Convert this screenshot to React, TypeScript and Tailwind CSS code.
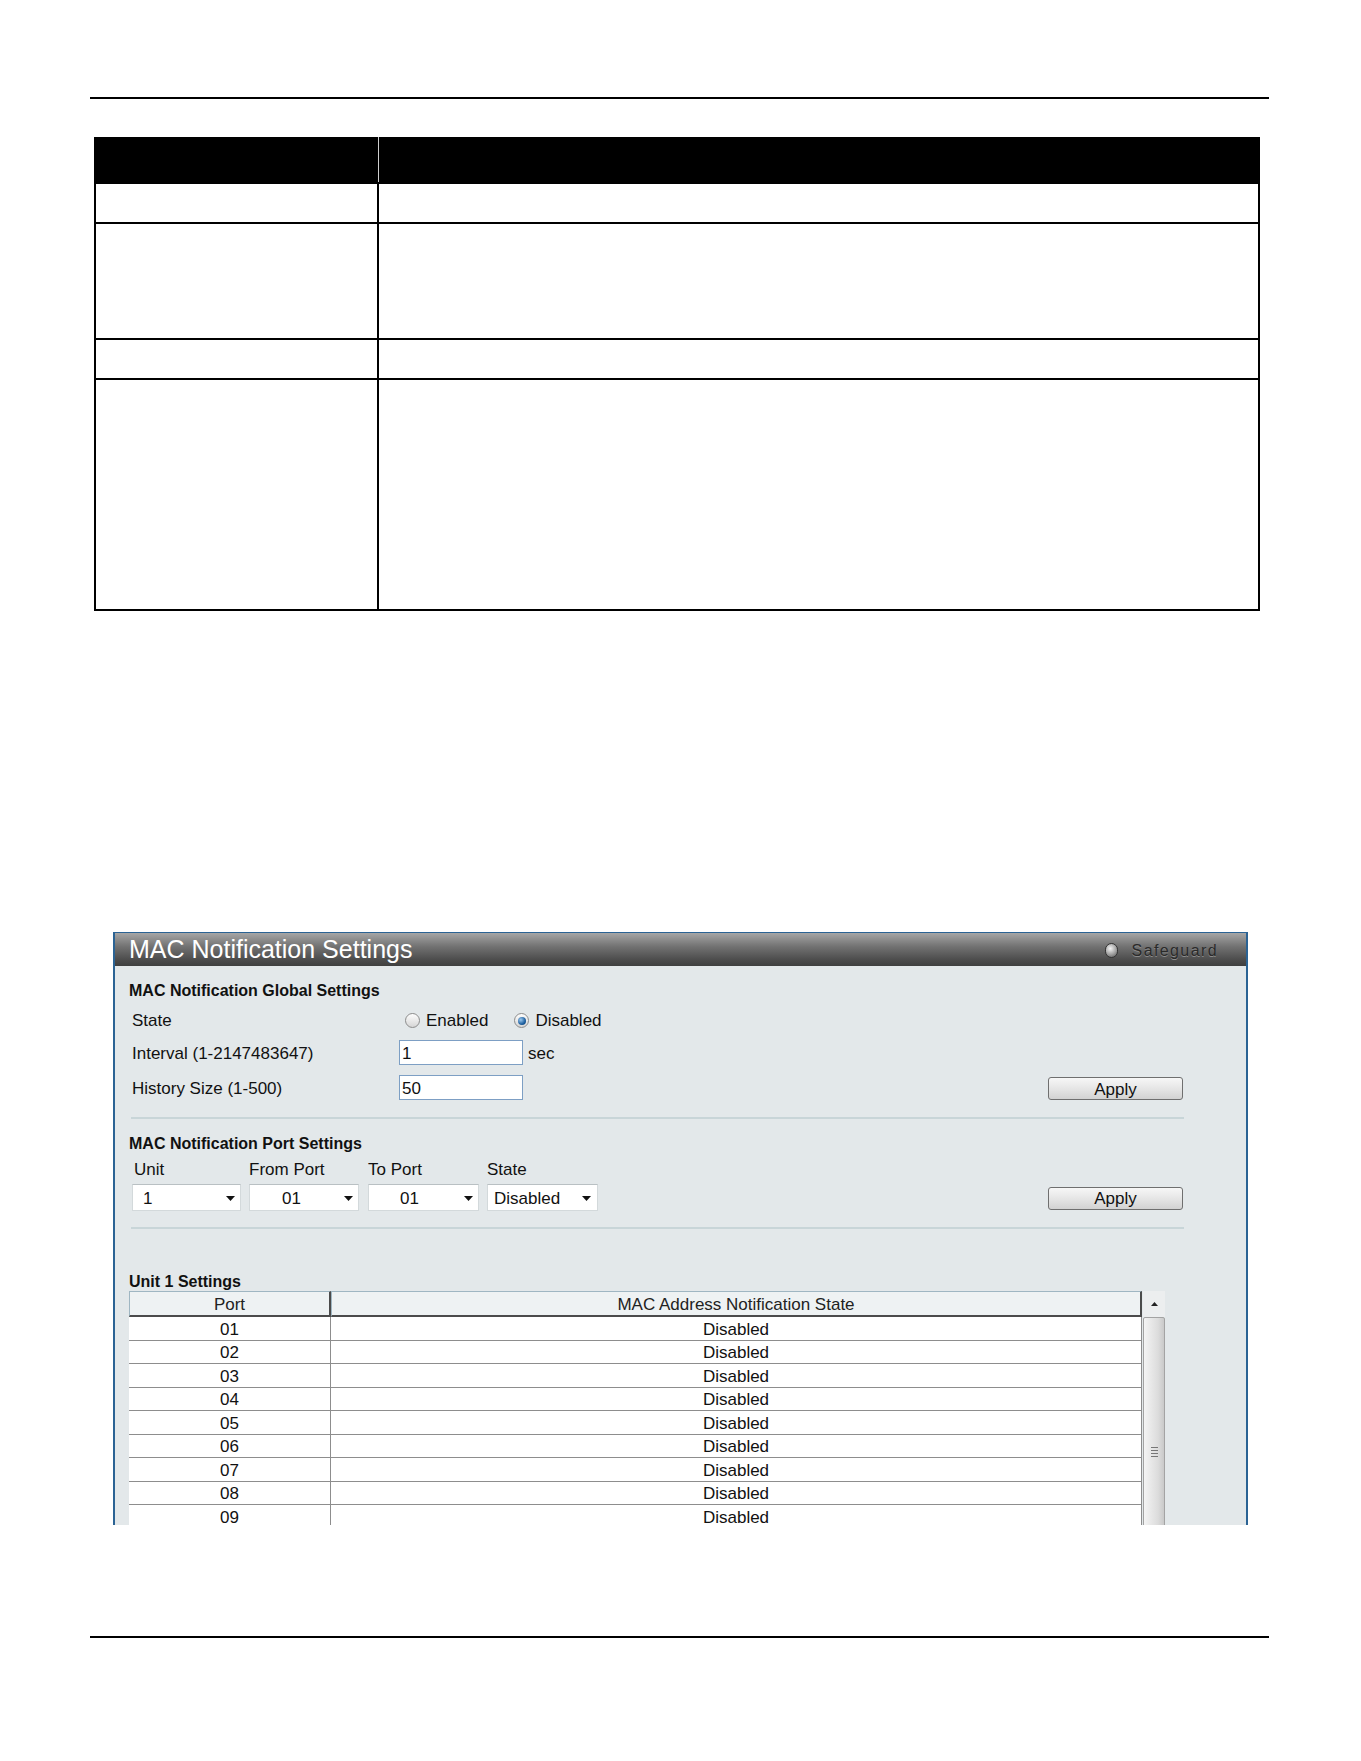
import React from "react";

const ports = ["01", "02", "03", "04", "05", "06", "07", "08", "09"];

function Radio({ checked }: { checked?: boolean }) {
  return (
    <span className="flex h-[15px] w-[15px] items-center justify-center rounded-full border border-[#8c8c8c] bg-[linear-gradient(#fdfdfd,#d6d6d6)]">
      {checked ? (
        <span className="h-[8px] w-[8px] rounded-full bg-[radial-gradient(circle_at_35%_35%,#9cc9ef,#1d5f9f_60%,#0f3f70)]" />
      ) : null}
    </span>
  );
}

function Arrow() {
  return (
    <svg width="9" height="5" viewBox="0 0 9 5" className="shrink-0">
      <path d="M0 0h9L4.5 5z" fill="#111" />
    </svg>
  );
}

function Select({ value, width, pl, pr }: { value: string; width: string; pl: string; pr: string }) {
  return (
    <div className={`flex h-[27px] items-center border border-[#d3d9db] border-t-[#b9c0c3] bg-white pt-[2px] ${width} ${pl} ${pr}`}>
      <span>{value}</span>
      <span className="ml-auto">
        <Arrow />
      </span>
    </div>
  );
}

function ApplyButton() {
  return (
    <button className="flex h-[23px] w-[135px] items-center justify-center rounded-[3px] border border-[#6f6f6f] bg-[linear-gradient(#f7f7f7,#e4e4e4_55%,#d2d2d2)] pt-[1px] text-[17px] leading-none text-[#111]">
      Apply
    </button>
  );
}

function Separator() {
  return <div className="ml-[2px] h-[2px] w-[1053px] bg-[#c8d5d8]" />;
}

function TitleBar() {
  return (
    <div className="flex h-[33px] items-center bg-[linear-gradient(#a6a6a6,#737373_40%,#4d4d4d_80%,#3f3f3f)] pl-[14px] pr-[28px]">
      <span className="text-[25px] leading-none text-white">MAC Notification Settings</span>
      <span className="ml-auto flex items-center gap-[14px] pt-[2px]">
        <span className="h-[15px] w-[13px] rounded-full border border-[#333] bg-[radial-gradient(circle_at_40%_35%,#f4f4f4,#a0a0a0_55%,#555)]" />
        <span className="text-[16px] leading-[20px] tracking-[1.4px] text-[#2a2a2a] [text-shadow:0_1px_0_#8c8c8c]">
          Safeguard
        </span>
      </span>
    </div>
  );
}

function UnitTable() {
  return (
    <div className="flex">
      <div className="w-[1013px]">
        <div className="flex h-[26px] text-[17px] leading-[20px] text-[#222]">
          <div className="flex w-[202px] items-center justify-center border-t border-l border-[#9fb6c2] border-r-2 border-b-2 border-r-[#4b4b4b] border-b-[#4b4b4b] bg-[#eef2f3] pt-[2px]">
            Port
          </div>
          <div className="flex w-[811px] items-center justify-center border-t border-l border-[#9fb6c2] border-r-2 border-b-2 border-r-[#4b4b4b] border-b-[#4b4b4b] bg-[#eef2f3] pt-[2px]">
            MAC Address Notification State
          </div>
        </div>
        {ports.map((p) => (
          <div key={p} className="flex h-[23.5px] bg-white text-[17px] leading-[19px] text-[#111]">
            <div className="flex w-[202px] items-center justify-center border-r border-b border-[#8d8d8d] pt-[2px]">{p}</div>
            <div className="flex w-[811px] items-center justify-center border-r border-b border-[#8d8d8d] pt-[2px]">Disabled</div>
          </div>
        ))}
      </div>
      <div className="ml-[1px] w-[22px]">
        <div className="flex h-[26px] items-center justify-center bg-[#eceeef]">
          <svg width="7" height="4" viewBox="0 0 7 4">
            <path d="M0 4h7L3.5 0z" fill="#222" />
          </svg>
        </div>
        <div className="flex h-[300px] items-start justify-center rounded-[2px] border border-[#a3a3a3] bg-[linear-gradient(90deg,#f4f4f4,#dcdcdc_70%,#c9c9c9)] pt-[129px]">
          <div className="flex w-[7px] flex-col gap-[2px]">
            <span className="h-px bg-[#777]" />
            <span className="h-px bg-[#777]" />
            <span className="h-px bg-[#777]" />
            <span className="h-px bg-[#777]" />
          </div>
        </div>
      </div>
    </div>
  );
}

export default function App() {
  return (
    <div className="h-[1761px] w-[1361px] bg-white font-['Liberation_Sans',Arial,sans-serif] text-[#111]">
      <div className="pt-[97px] pl-[90px]">
        <div className="h-[2px] w-[1179px] bg-black" />
      </div>

      {/* parameter table */}
      <div className="ml-[94px] mt-[38px] w-[1166px] border-x-2 border-b-2 border-black">
        <div className="flex h-[45px] bg-black">
          <div className="w-[283px] border-r border-[#cfcfcf]" />
        </div>
        <div className="flex h-[40px] border-t-2 border-black">
          <div className="w-[283px] border-r-2 border-black" />
        </div>
        <div className="flex h-[116px] border-t-2 border-black">
          <div className="w-[283px] border-r-2 border-black" />
        </div>
        <div className="flex h-[40px] border-t-2 border-black">
          <div className="w-[283px] border-r-2 border-black" />
        </div>
        <div className="flex h-[231px] border-t-2 border-black">
          <div className="w-[283px] border-r-2 border-black" />
        </div>
      </div>

      {/* settings panel */}
      <div className="ml-[113px] mt-[321px] h-[593px] w-[1135px] overflow-hidden border-x-2 border-t border-[#2b6394] bg-[#e3e8ea]">
        <TitleBar />
        <div className="pl-[14px] text-[17px] leading-[20px]">
          <div className="w-[1055px]">
            <div className="mt-[14px] h-[22px] text-[16px] font-bold leading-[22px]">MAC Notification Global Settings</div>

            <div className="mt-[4px] flex h-[26px] items-center pl-[3px] pt-[3px]">
              <span className="w-[267px]">State</span>
              <span className="flex items-center pl-[6px]">
                <Radio />
                <span className="ml-[6px]">Enabled</span>
                <span className="ml-[26px]">
                  <Radio checked />
                </span>
                <span className="ml-[6px]">Disabled</span>
              </span>
            </div>

            <div className="mt-[8px] flex h-[25px] items-center pl-[3px]">
              <span className="w-[267px] pt-[3px]">Interval (1-2147483647)</span>
              <div className="flex h-[25px] w-[124px] items-center border border-[#7d9fc4] bg-white pl-[2px] pt-[2px]">1</div>
              <span className="ml-[5px] pt-[3px]">sec</span>
            </div>

            <div className="mt-[10px] flex h-[25px] items-center pl-[3px]">
              <span className="w-[267px] pt-[3px]">History Size (1-500)</span>
              <div className="flex h-[25px] w-[124px] items-center border border-[#7d9fc4] bg-white pl-[2px] pt-[2px]">50</div>
              <span className="ml-auto mr-[1px] mt-[2px]">
                <ApplyButton />
              </span>
            </div>

            <div className="mt-[17px]">
              <Separator />
            </div>

            <div className="mt-[14px] h-[22px] text-[16px] font-bold leading-[22px]">MAC Notification Port Settings</div>

            <div className="mt-[3px] flex h-[21px] items-center pl-[3px] pt-[3px]">
              <span className="w-[117px] pl-[2px]">Unit</span>
              <span className="w-[119px]">From Port</span>
              <span className="w-[119px]">To Port</span>
              <span className="w-[111px]">State</span>
            </div>

            <div className="mt-[5px] flex h-[27px] items-center pl-[3px]">
              <div className="w-[117px]">
                <Select value="1" width="w-[109px]" pl="pl-[10px]" pr="pr-[5px]" />
              </div>
              <div className="w-[119px]">
                <Select value="01" width="w-[110px]" pl="pl-[32px]" pr="pr-[5px]" />
              </div>
              <div className="w-[119px]">
                <Select value="01" width="w-[111px]" pl="pl-[31px]" pr="pr-[5px]" />
              </div>
              <div className="w-[111px]">
                <Select value="Disabled" width="w-[111px]" pl="pl-[6px]" pr="pr-[6px]" />
              </div>
              <span className="ml-auto mr-[1px] mt-[1px]">
                <ApplyButton />
              </span>
            </div>

            <div className="mt-[16px]">
              <Separator />
            </div>

            <div className="mt-[43px] h-[20px] text-[16px] font-bold leading-[20px]">Unit 1 Settings</div>
            <div className="mt-[-1px]">
              <UnitTable />
            </div>
          </div>
        </div>
      </div>

      <div className="mt-[111px] pl-[90px]">
        <div className="h-[2px] w-[1179px] bg-black" />
      </div>
    </div>
  );
}
